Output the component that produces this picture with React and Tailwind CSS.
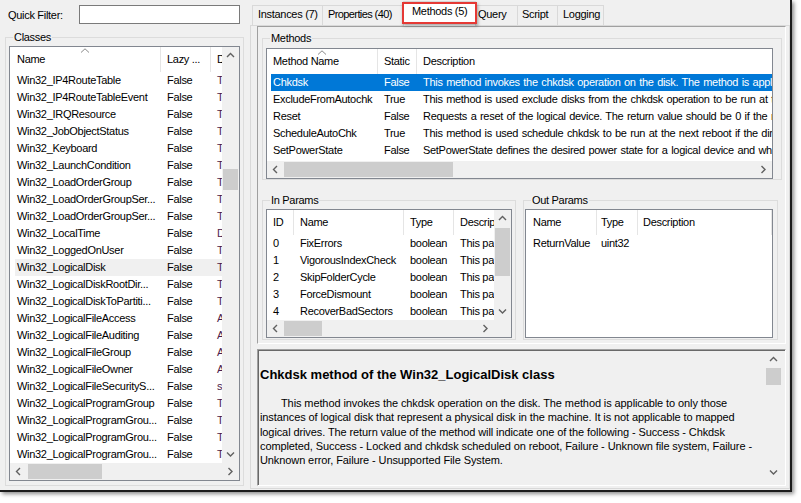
import React from "react";

const Chev = ({ dir, color = "#606060" }) => {
  const v = dir === "up" || dir === "down";
  const pts = {
    up: "1,5 4.5,1.5 8,5",
    down: "1,1.5 4.5,5 8,1.5",
    left: "5,1 1.5,4.5 5,8",
    right: "1.5,1 5,4.5 1.5,8",
  }[dir];
  return (
    <svg width={v ? 9 : 7} height={v ? 7 : 9} viewBox={v ? "0 0 9 7" : "0 0 7 9"}>
      <polyline points={pts} fill="none" stroke={color} strokeWidth="1.4" />
    </svg>
  );
};

const SortArrow = () => (
  <svg width="9" height="5" viewBox="0 0 9 5">
    <polyline points="0.5,4.5 4.5,0.8 8.5,4.5" fill="none" stroke="#8a8a8a" strokeWidth="1" />
  </svg>
);

const VScroll = ({ className = "", gap, thumb }) => (
  <div className={`flex w-[17px] shrink-0 flex-col bg-[#f0f0f0] ${className}`}>
    <div className="flex h-[17px] shrink-0 items-center justify-center">
      <Chev dir="up" />
    </div>
    <div className="flex flex-1 flex-col">
      <div className={`shrink-0 ${gap}`} />
      <div className={`mx-[1px] shrink-0 bg-[#cdcdcd] ${thumb}`} />
    </div>
    <div className="flex h-[17px] shrink-0 items-center justify-center">
      <Chev dir="down" />
    </div>
  </div>
);

const HScroll = ({ className = "", gap, thumb }) => (
  <div className={`flex h-[17px] shrink-0 bg-[#f0f0f0] ${className}`}>
    <div className="flex w-[17px] shrink-0 items-center justify-center">
      <Chev dir="left" />
    </div>
    <div className="flex flex-1">
      <div className={`shrink-0 ${gap}`} />
      <div className={`my-[1px] shrink-0 bg-[#cdcdcd] ${thumb}`} />
    </div>
    <div className="flex w-[17px] shrink-0 items-center justify-center">
      <Chev dir="right" />
    </div>
  </div>
);

const HCell = ({ className = "", children, sort }) => (
  <div className={`relative flex h-full shrink-0 items-center overflow-hidden whitespace-nowrap ${className}`}>
    {sort && (
      <span className="absolute left-1/2 top-[1px] -translate-x-1/2">
        <SortArrow />
      </span>
    )}
    {children}
  </div>
);

const Legend = ({ children }) => (
  <span className="absolute left-[7px] top-[-7px] bg-[#f0f0f0] px-[1px] leading-[13px]">{children}</span>
);

const classes = [
  ["Win32_IP4RouteTable", "T"],
  ["Win32_IP4RouteTableEvent", "T"],
  ["Win32_IRQResource", "T"],
  ["Win32_JobObjectStatus", "T"],
  ["Win32_Keyboard", "T"],
  ["Win32_LaunchCondition", "T"],
  ["Win32_LoadOrderGroup", "T"],
  ["Win32_LoadOrderGroupSer...", "T"],
  ["Win32_LoadOrderGroupSer...", "T"],
  ["Win32_LocalTime", "D"],
  ["Win32_LoggedOnUser", "T"],
  ["Win32_LogicalDisk", "T"],
  ["Win32_LogicalDiskRootDir...", "T"],
  ["Win32_LogicalDiskToPartiti...", "T"],
  ["Win32_LogicalFileAccess", "A"],
  ["Win32_LogicalFileAuditing", "A"],
  ["Win32_LogicalFileGroup", "A"],
  ["Win32_LogicalFileOwner", "A"],
  ["Win32_LogicalFileSecurityS...", "s"],
  ["Win32_LogicalProgramGroup", "T"],
  ["Win32_LogicalProgramGrou...", "T"],
  ["Win32_LogicalProgramGrou...", "T"],
  ["Win32_LogicalProgramGrou...", "T"],
];

const methods = [
  ["Chkdsk", "False", "This method invokes the chkdsk operation on the disk. The method is applicable to only those instances of logical disk"],
  ["ExcludeFromAutochk", "True", "This method is used exclude disks from the chkdsk operation to be run at the next reboot."],
  ["Reset", "False", "Requests a reset of the logical device. The return value should be 0 if the request was successfully executed"],
  ["ScheduleAutoChk", "True", "This method is used schedule chkdsk to be run at the next reboot if the dirty bit has been set."],
  ["SetPowerState", "False", "SetPowerState defines the desired power state for a logical device and when a device should be put into that state."],
];

const inParams = [
  ["0", "FixErrors"],
  ["1", "VigorousIndexCheck"],
  ["2", "SkipFolderCycle"],
  ["3", "ForceDismount"],
  ["4", "RecoverBadSectors"],
];

function ClassList() {
  return (
    <div className="flex h-[435px] w-[231px] flex-col border border-[#828790] bg-white">
      <div className="flex min-h-0 flex-1">
        <div className="flex w-[212px] shrink-0 flex-col overflow-hidden">
          <div className="flex h-[25px] shrink-0">
            <HCell className="w-[151px] border-r border-[#e5e5e5] pl-[7px]" sort>Name</HCell>
            <HCell className="w-[50px] border-r border-[#e5e5e5] pl-[6px]">Lazy ...</HCell>
            <HCell className="w-[11px] pl-[6px]">Description</HCell>
          </div>
          {classes.map(([n, d], i) => (
            <div key={i} className={`ml-[5px] flex h-[17px] shrink-0 items-center ${i === 11 ? "bg-[#f0f0f0]" : ""}`}>
              <div className="w-[146px] shrink-0 overflow-hidden whitespace-nowrap pl-[2px]">{n}</div>
              <div className="w-[50px] shrink-0 pl-[6px]">False</div>
              <div className="w-[11px] shrink-0 overflow-hidden whitespace-nowrap pl-[6px] text-[#4b1c4b]">{d}he</div>
            </div>
          ))}
        </div>
        <VScroll gap="h-[105px]" thumb="h-[21px]" />
      </div>
      <HScroll gap="w-[1px]" thumb="w-[74px]" />
    </div>
  );
}

function LeftPane() {
  return (
    <div className="flex w-[246px] shrink-0 flex-col">
      <div className="flex items-center pl-[8px] pt-[5px]">
        <span className="w-[71px] shrink-0 pt-[1px]">Quick Filter:</span>
        <div className="h-[19px] w-[161px] border border-[#7a7a7a] bg-white" />
      </div>
      <div className="relative ml-[5px] mt-[13px] w-[239px] border border-[#dcdcdc] px-[3px] pb-[4px] pt-[8px]">
        <Legend>Classes</Legend>
        <ClassList />
      </div>
    </div>
  );
}

function MethodsList() {
  return (
    <div className="flex h-[131px] w-[507px] flex-col border border-[#828790] bg-white">
      <div className="flex h-[25px] shrink-0">
        <HCell className="w-[111px] border-r border-[#e5e5e5] pl-[6px]" sort>Method Name</HCell>
        <HCell className="w-[39px] border-r border-[#e5e5e5] pl-[6px]">Static</HCell>
        <HCell className="flex-1 pl-[6px]">Description</HCell>
      </div>
      {methods.map(([n, s, d], i) => (
        <div
          key={i}
          className={`ml-[4px] flex h-[17px] shrink-0 items-center overflow-hidden ${i === 0 ? "bg-[#0078d7] text-white" : ""}`}
        >
          <div className="w-[107px] shrink-0 overflow-hidden whitespace-nowrap pl-[2px]">{n}</div>
          <div className="w-[39px] shrink-0 pl-[6px]">{s}</div>
          <div className="min-w-0 flex-1 overflow-hidden whitespace-nowrap pl-[6px] [word-spacing:0.8px]">{d}</div>
        </div>
      ))}
      <div className="h-[2px] shrink-0" />
      <HScroll gap="w-0" thumb="w-[169px]" />
    </div>
  );
}

function InParamsList() {
  return (
    <div className="flex h-[129px] w-[246px] flex-col border border-[#828790] bg-white">
      <div className="flex h-[110px] shrink-0">
        <div className="flex w-[227px] shrink-0 flex-col overflow-hidden">
          <div className="flex h-[25px] shrink-0">
            <HCell className="w-[27px] border-r border-[#e5e5e5] pl-[6px]">ID</HCell>
            <HCell className="w-[110px] border-r border-[#e5e5e5] pl-[6px]">Name</HCell>
            <HCell className="w-[50px] border-r border-[#e5e5e5] pl-[6px]">Type</HCell>
            <HCell className="w-[40px] pl-[6px]">Description</HCell>
          </div>
          {inParams.map(([id, n], i) => (
            <div key={i} className="ml-[4px] flex h-[17px] shrink-0 items-center">
              <div className="w-[23px] shrink-0 pl-[2px]">{id}</div>
              <div className="w-[110px] shrink-0 overflow-hidden whitespace-nowrap pl-[6px]">{n}</div>
              <div className="w-[50px] shrink-0 pl-[6px]">boolean</div>
              <div className="w-[40px] shrink-0 overflow-hidden whitespace-nowrap pl-[6px]">This parameter</div>
            </div>
          ))}
        </div>
        <VScroll gap="h-[1px]" thumb="h-[48px]" />
      </div>
      <div className="flex shrink-0">
        <HScroll className="w-[227px]" gap="w-0" thumb="w-[38px]" />
        <div className="h-[17px] w-[17px] bg-[#f0f0f0]" />
      </div>
    </div>
  );
}

function OutParamsList() {
  return (
    <div className="flex h-[129px] w-[248px] flex-col border border-[#828790] bg-white">
      <div className="flex h-[25px] shrink-0">
        <HCell className="w-[71px] border-r border-[#e5e5e5] pl-[7px]">Name</HCell>
        <HCell className="w-[41px] border-r border-[#e5e5e5] pl-[4px]">Type</HCell>
        <HCell className="w-[134px] border-r border-[#e5e5e5] pl-[5px]">Description</HCell>
      </div>
      <div className="ml-[4px] flex h-[17px] shrink-0 items-center">
        <div className="w-[67px] shrink-0 pl-[3px]">ReturnValue</div>
        <div className="w-[41px] shrink-0 pl-[4px]">uint32</div>
      </div>
    </div>
  );
}

function RightPane() {
  return (
    <div className="relative flex w-[544px] shrink-0 flex-col">
      <div className="flex h-[25px] shrink-0 items-end pl-[6px]">
        <div className="h-[20px] w-[70px] whitespace-nowrap border-l border-t border-[#d9d9d9] bg-[#f0f0f0] pl-[5px] pt-[2px]">Instances (7)</div>
        <div className="h-[20px] w-[81px] whitespace-nowrap border-l border-t border-[#d9d9d9] bg-[#f0f0f0] pl-[5px] pt-[2px] tracking-[-0.6px]">Properties (40)</div>
        <div className="relative z-10 -mb-[1px] h-[25px] w-[73px] whitespace-nowrap border-x border-t border-[#d9d9d9] bg-white pl-[8px] pt-[3px]">Methods (5)</div>
        <div className="h-[20px] w-[41px] border-t border-[#d9d9d9] bg-[#f0f0f0] pl-[2px] pt-[2px]">Query</div>
        <div className="h-[20px] w-[40px] border-l border-t border-[#d9d9d9] bg-[#f0f0f0] pl-[4px] pt-[2px]">Script</div>
        <div className="h-[20px] w-[47px] border-x border-t border-[#d9d9d9] bg-[#f0f0f0] pl-[5px] pt-[2px]">Logging</div>
      </div>

      <div className="mb-[1px] ml-[4px] flex flex-1 flex-col border border-[#d9d9d9] pb-[2px] pl-[6px] pr-[3px]">
        <div className="flex h-[318px] shrink-0 flex-col border border-b-white border-l-[#a0a0a0] border-r-white border-t-[#a0a0a0]">
          <div className="relative ml-[4px] mr-[3px] mt-[11px] border border-[#dcdcdc] pl-[3px] pt-[9px]">
            <Legend>Methods</Legend>
            <MethodsList />
          </div>
          <div className="ml-[4px] mt-[20px] flex gap-[7px]">
            <div className="relative w-[254px] border border-[#dcdcdc] pb-[1px] pl-[3px] pt-[8px]">
              <Legend>In Params</Legend>
              <InParamsList />
            </div>
            <div className="relative w-[255px] border border-[#dcdcdc] pb-[1px] pl-[1px] pt-[8px]">
              <Legend>Out Params</Legend>
              <OutParamsList />
            </div>
          </div>
        </div>

        <div className="mt-[5px] flex flex-1 border border-b-white border-l-[#a0a0a0] border-r-white border-t-[#a0a0a0] shadow-[inset_1px_1px_0_#696969]">
          <div className="min-w-0 flex-1 pl-[2px] pt-[17px] font-['Liberation_Sans',Arial,sans-serif]">
            <div className="whitespace-nowrap text-[13px] font-bold leading-[16px] tracking-normal">
              Chkdsk method of the Win32_LogicalDisk class
            </div>
            <p className="mt-[13px] whitespace-nowrap indent-[21px] text-[11px] leading-[14.25px] tracking-[-0.1px]">
              This method invokes the chkdsk operation on the disk. The method is applicable to only those
              <br />
              instances of logical disk that represent a physical disk in the machine. It is not applicable to mapped
              <br />
              logical drives. The return value of the method will indicate one of the following - Success - Chkdsk
              <br />
              completed, Success - Locked and chkdsk scheduled on reboot, Failure - Unknown file system, Failure -
              <br />
              Unknown error, Failure - Unsupported File System.
            </p>
          </div>
          <VScroll className="mr-[3px] mt-[1px] h-[130px]" gap="h-0" thumb="h-[17px]" />
        </div>
      </div>

      <div className="pointer-events-none absolute left-[156px] top-[2px] z-20 h-[22px] w-[75px] border-2 border-[#e53935] shadow-[1px_2px_3px_rgba(0,0,0,0.35)]" />
    </div>
  );
}

export default function App() {
  return (
    <div className="h-[503px] w-[801px] overflow-hidden bg-white font-['Liberation_Sans',Arial,sans-serif] text-[11px] leading-[13px] tracking-[-0.3px] text-black">
      <div className="flex h-[492px] w-[792px] border-b-2 border-r-2 border-[#1c1c1c] bg-[#f0f0f0] shadow-[2px_2px_4px_rgba(0,0,0,0.45)]">
        <LeftPane />
        <RightPane />
      </div>
    </div>
  );
}
